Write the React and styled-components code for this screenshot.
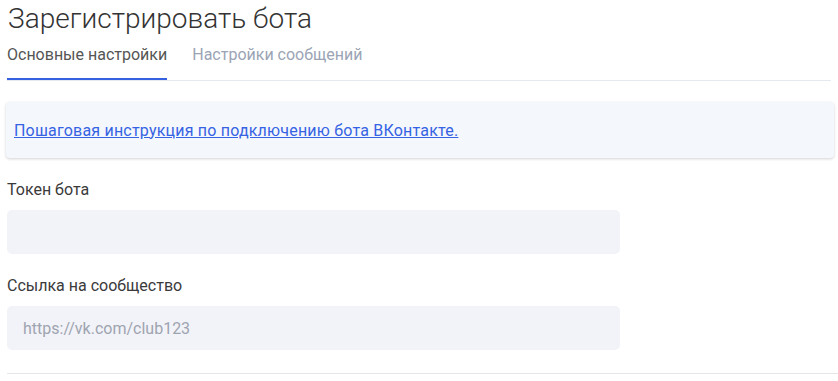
import React, { useState } from "react";
import styled, { createGlobalStyle } from "styled-components";

const GlobalStyle = createGlobalStyle`
  body {
    margin: 0;
    background: #fff;
    font-family: Roboto, "Noto Sans", sans-serif;
    color: #333;
  }
`;

const tabs = ["Основные настройки", "Настройки сообщений"];

const App = () => {
  const [active, setActive] = useState(0);

  return (
    <>
      <GlobalStyle />
      <StPage>
        <StTitle>Зарегистрировать бота</StTitle>
        <StTabs>
          {tabs.map((t, i) => (
            <StTab key={t} $active={i === active} onClick={() => setActive(i)}>
              {t}
            </StTab>
          ))}
        </StTabs>

        <StInfo>
          <StLink href="#">Пошаговая инструкция по подключению бота ВКонтакте.</StLink>
        </StInfo>

        <StField>
          <StLabel>Токен бота</StLabel>
          <StInput type="text" />
        </StField>
        <StField>
          <StLabel>Ссылка на сообщество</StLabel>
          <StInput type="text" placeholder="https://vk.com/club123" />
        </StField>

        <StDivider />
      </StPage>
    </>
  );
};

export default App;

const StPage = styled.div`
  padding: 0 7px;
  display: flex;
  flex-direction: column;
`;

const StTitle = styled.h1`
  margin: 0;
  padding: 2px 0 0 1px;
  font-size: 28px;
  line-height: 34px;
  font-weight: 300;
  color: #333;
`;

const StTabs = styled.div`
  display: flex;
  gap: 25px;
  margin-top: 9px;
  border-bottom: 1px solid #e7e9f0;
`;

const StTab = styled.div`
  font-size: 16px;
  line-height: 20px;
  padding: 0 0 13px;
  cursor: pointer;
  color: ${(p) => (p.$active ? "#555" : "#9ba4b5")};
  border-bottom: 2px solid ${(p) => (p.$active ? "#3560e0" : "transparent")};
`;

const StInfo = styled.div`
  margin: 21px -3px 0 -1px;
  height: 56px;
  box-sizing: border-box;
  padding: 0 8px;
  display: flex;
  align-items: center;
  background: #f4f7fc;
  border-radius: 4px;
  box-shadow: 0 1px 3px rgba(0, 0, 0, 0.18);
`;

const StLink = styled.a`
  font-size: 16px;
  letter-spacing: 0.2px;
  color: #3563e3;
  text-decoration: underline;
`;

const StField = styled.div`
  display: flex;
  flex-direction: column;
  margin-top: 22px;
`;

const StLabel = styled.label`
  font-size: 16px;
  line-height: 20px;
  color: #3a3a3a;
  margin-bottom: 10px;
`;

const StInput = styled.input`
  width: 613px;
  height: 44px;
  box-sizing: border-box;
  border: none;
  border-radius: 5px;
  background: #f2f3f8;
  padding: 0 16px;
  font-family: inherit;
  font-size: 16px;
  color: #333;
  outline: none;

  &::placeholder {
    color: #9ea4b0;
  }
`;

const StDivider = styled.div`
  margin-top: 23px;
  height: 1px;
  background: #e6e6ea;
  margin-right: -7px;
`;
